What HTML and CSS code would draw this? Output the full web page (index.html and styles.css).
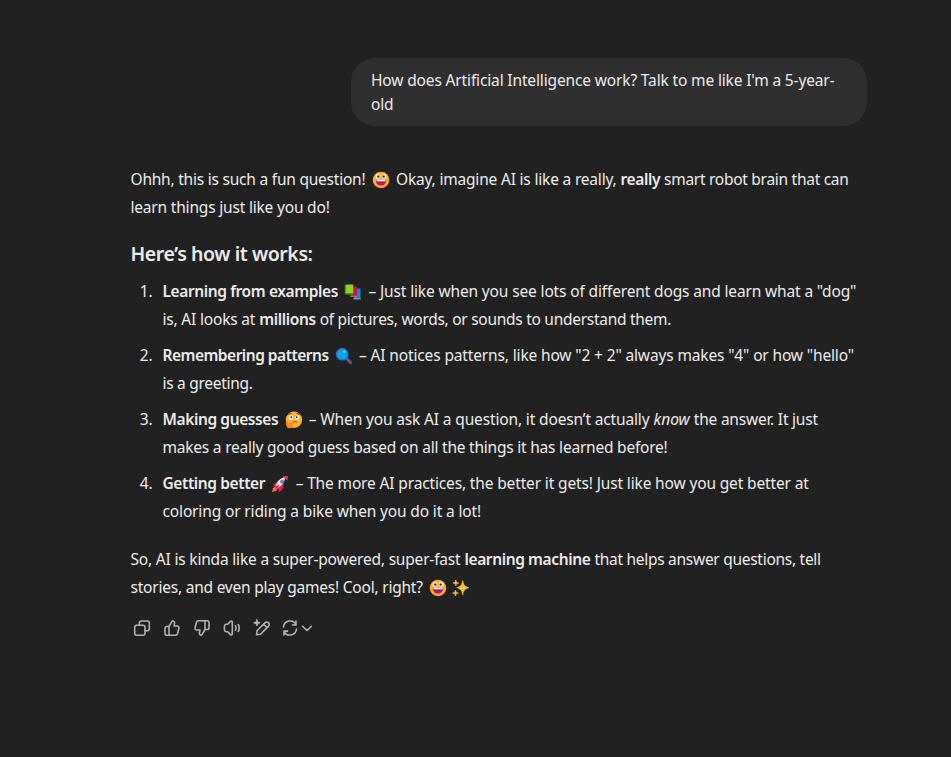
FILE: index.html
```html
<!DOCTYPE html>
<html lang="en">
<head>
<meta charset="utf-8">
<title>Conversation</title>
<link rel="stylesheet" href="styles.css">
</head>
<body>
<svg class="defs" width="0" height="0">
  <symbol id="grin" viewBox="0 0 18 18"><circle cx="9" cy="9" r="8.300" fill="#f9921f"/><circle cx="9" cy="8.700" r="7.700" fill="#ffb02e"/><circle cx="6" cy="5.400" r="2.300" fill="#fff"/><circle cx="12" cy="5.400" r="2.300" fill="#fff"/><circle cx="6.300" cy="5.500" r="1.200" fill="#3b2a38"/><circle cx="11.700" cy="5.500" r="1.200" fill="#3b2a38"/><path d="M3.800 9h10.400c0 3.600-2 5.600-5.200 5.600S3.800 12.600 3.800 9z" fill="#bc1665"/><path d="M4.600 9h8.800v1.300H4.600z" fill="#fff"/></symbol>
  <symbol id="books" viewBox="0 0 18 18"><path d="M10 5.500h6.500v9.500H10z" fill="#008fe0"/><path d="M9.500 15.300h7.300v1H9.500z" fill="#a9c4de"/><path d="M7 3.500h6v10H7z" fill="#c80d55"/><path d="M5.500 12.800h7.500v1H6.500z" fill="#b58a9f"/><path d="M1.500 1.500h7.800v9H1.500z" fill="#86d51f"/><path d="M.8 2v8.500l1 1h7.700v-1H2V2z" fill="#4c9b18"/></symbol>
  <symbol id="lens" viewBox="0 0 18 18"><path d="M11.500 11.500l4 4" stroke="#635994" stroke-width="3" stroke-linecap="round"/><circle cx="7.200" cy="7.200" r="5.800" fill="#00a6ed" stroke="#4a5fa0" stroke-width="1.200"/><circle cx="9.300" cy="4.600" r="1.100" fill="#8bdcff"/></symbol>
  <symbol id="think" viewBox="0 0 18 18"><circle cx="9" cy="8.700" r="8.200" fill="#ffb02e"/><circle cx="6" cy="6.500" r="2.300" fill="#fff"/><circle cx="12" cy="6.500" r="2.300" fill="#fff"/><circle cx="6.300" cy="6.300" r="1" fill="#402a32"/><circle cx="11.700" cy="6.300" r="1" fill="#402a32"/><path d="M3.500 3.500l3-1M11.500 2.200l3 1.500M8 11.300c1.500-1 3-.8 4 .2" fill="none" stroke="#593429" stroke-width=".9"/><path d="M1 10c1-1 2 0 2 2l5-1c1.500 0 1.500 1.500.3 1.800L7 13c1.500 3-1 4.600-3 4.300C1.500 17 .500 13 1 10z" fill="#ff822d"/></symbol>
  <symbol id="rocket" viewBox="0 0 18 18"><path d="M3 9l5-4 5 5-2 5-3 2-1-4-2-2-3 1z" fill="#e51b57"/><path d="M5 10.500c1.500-5 5-7.800 9-8.500 0 5-3 8.500-7.500 11z" fill="#e7e6eb"/><path d="M12 1.200L17 .800l-.5 5z" fill="#ee3156"/><circle cx="11" cy="6.700" r="1.900" fill="#438db8"/><path d="M1 17l1-4 3-2 2 2-2 3z" fill="#ff7043"/><path d="M5 13l3-3" stroke="#c31355" stroke-width="1.500"/></symbol>
  <symbol id="sparkle" viewBox="0 0 18 18"><path d="M10.700 1.500c.9 4.500 1.700 5.800 6.300 7.200-4.600 1.400-5.400 2.600-6.300 7.300-.9-4.700-1.700-5.900-6-7.300 4.300-1.400 5.100-2.700 6-7.200zM3.800 1l.8 2.200 2.200.8-2.200.8L3.800 7 3 4.800.8 4 3 3.200zM3.500 11l.8 2.200 2.200.8-2.200.8-.8 2.200-.8-2.200L.5 14l2.200-.8z" fill="#fcc23a" stroke="#fcc23a" stroke-width=".5"/></symbol>
</svg>
<main class="thread">
  <div class="bubble"><span class="line"><span class="k1">How does Artificial Intelligence work? Talk to me like I'm a 5-year-</span></span><span class="line"><span class="k1">old</span></span></div>
  <article class="answer">
    <p class="intro"><span class="line"><span class="k3">Ohhh, this is such a fun question!</span> <svg class="emoji"><use href="#grin"/></svg> <span class="k2">Okay, imagine AI is like a really,</span> <b>really</b> <span class="k4">smart robot brain that can</span></span><span class="line"><span class="k2">learn things just like you do!</span></span></p>
    <h3>Here’s how it works:</h3>
    <ol>
      <li><div><span class="line"><b>Learning from examples</b> <svg class="emoji"><use href="#books"/></svg> <span class="k1">– Just like when you see lots of different dogs and learn what a "dog"</span></span><span class="line"><span class="k2">is, AI looks at</span> <b>millions</b> <span class="k4">of pictures, words, or sounds to understand them.</span></span></div></li>
      <li><div><span class="line"><b class="k5">Remembering patterns</b> <svg class="emoji"><use href="#lens"/></svg> <span class="k1">– AI notices patterns, like how "2 + 2" always makes "4" or how "hello"</span></span><span class="line"><span class="k4">is a greeting.</span></span></div></li>
      <li><div><span class="line"><b>Making guesses</b> <svg class="emoji"><use href="#think"/></svg> <span class="k1">– When you ask AI a question, it doesn’t actually</span> <i>know</i> <span class="k3">the answer. It just</span></span><span class="line"><span class="k3">makes a really good guess based on all the things it has learned before!</span></span></div></li>
      <li><div><span class="line"><b>Getting better</b> <svg class="emoji"><use href="#rocket"/></svg> <span class="k1">– The more AI practices, the better it gets! Just like how you get better at</span></span><span class="line"><span class="k1">coloring or riding a bike when you do it a lot!</span></span></div></li>
    </ol>
    <p class="outro"><span class="line"><span class="k2">So, AI is kinda like a super-powered, super-fast</span> <b>learning machine</b> <span class="k4">that helps answer questions, tell</span></span><span class="line"><span class="k3">stories, and even play games! Cool, right?</span> <svg class="emoji"><use href="#grin"/></svg><svg class="emoji"><use href="#sparkle"/></svg></span></p>
    <div class="actions">
      <button aria-label="Copy"><svg viewBox="0 0 18 18"><rect x="1.700" y="6.200" width="10.300" height="10.100" rx="2"/><path d="M6.300 6V3.900a2 2 0 0 1 2-2h6a2 2 0 0 1 2 2v5.900a2 2 0 0 1-2 2h-2"/></svg></button>
      <button aria-label="Good response"><svg viewBox="0 0 18 18"><path d="M6 7.500L9 2.400c.3-.6.800-.7 1.300-.5 1.200.4 1.500 1.200 1.300 2.200L11 7h3.200c1.300 0 2 1 1.700 2.200l-1.300 5.300c-.3 1.100-1 1.700-2.200 1.700H3.800c-1.100 0-1.800-.7-1.800-1.800V9.300c0-1.100.7-1.800 1.800-1.800zM6 7.500v8.500"/></svg></button>
      <button aria-label="Bad response"><svg viewBox="0 0 18 18"><path d="M12 10.500L9 15.600c-.3.600-.8.700-1.300.5-1.200-.4-1.500-1.200-1.300-2.200L7 11H3.800c-1.300 0-2-1-1.700-2.200l1.300-5.300c.3-1.100 1-1.700 2.200-1.700h8.600c1.100 0 1.800.7 1.800 1.800v5.100c0 1.100-.7 1.800-1.800 1.800zM12 10.500V2"/></svg></button>
      <button aria-label="Read aloud"><svg viewBox="0 0 18 18"><path d="M9.300 3.200c0-1.200-1-1.600-1.900-.8L4.700 5.200H3.300c-.8 0-1.400.4-1.600 1.200-.5 1.700-.5 3.500 0 5.200.2.800.8 1.200 1.600 1.200h1.400l2.700 2.800c.9.800 1.900.4 1.900-.8zM12.400 6.700c.8 1.500.8 3.100 0 4.600M15.200 5.500c1.400 2.300 1.400 4.700 0 7"/></svg></button>
      <button aria-label="Edit in canvas"><svg viewBox="0 0 18 18"><path d="M3.500 15.800l.5-4 7.900-7.900c1.200-1.200 2.500-1.200 3.600-.1s1.100 2.400-.1 3.600l-7.900 7.900zM10.600 5.200l3.500 3.500"/><path d="M3.900.8l.9 2.100 2.300.9-2.300.9-.9 2.200L3 4.700.7 3.800 3 2.900z" fill="currentColor" stroke-width="1"/></svg></button>
      <button class="retry" aria-label="Switch model"><svg viewBox="0 0 18 18"><path d="M2.500 8A6.600 6.600 0 0 1 15 5.700V2M15.200 5.900h-3.900M15.500 10A6.600 6.600 0 0 1 3 12.300V16M2.800 12.100h3.900"/></svg><svg class="chev" viewBox="0 0 12 18"><path d="M1.600 7.200L6 11.500l4.400-4.300"/></svg></button>
    </div>
  </article>
</main>
</body>
</html>
```
FILE: styles.css
```css
body{margin:0;background:#212121;color:#ececec;font:15.500px/28px "Noto Sans",sans-serif}
.defs{position:absolute}
.thread{width:736.500px;margin-left:130.500px;padding-top:58px}
.line{display:block;white-space:nowrap}
.bubble{box-sizing:border-box;width:516px;margin-left:auto;padding:10px 20px;line-height:24px;background:#2f2f2f;border-radius:24px}
.answer{padding-top:39px}
p,h3,ol{margin:0}
h3{font-size:19.500px;margin:19px 0 9px;letter-spacing:-.42px}
ol{padding:0;list-style:none;counter-reset:step}
li{display:grid;grid-template-columns:22px 1fr;column-gap:10px;counter-increment:step}
li+li{margin-top:8px}
li::before{content:counter(step) ".";text-align:right;letter-spacing:-.2px}
b,h3{font-weight:600}
b{letter-spacing:-.39px}
.k1{letter-spacing:-.145px}
.k2{letter-spacing:-.19px}
.k3{letter-spacing:-.22px}
.k4{letter-spacing:-.28px}
.k5{letter-spacing:-.5px}
.emoji{width:18px;height:18px;margin:0 2.200px 0 2.300px;vertical-align:-3.500px}
.outro{margin-top:20px}
.actions{display:flex;margin:12px 0 0 -3.500px}
button{display:flex;align-items:center;justify-content:center;width:30px;height:30px;padding:0;border:0;background:none;color:#b4b4b4}
button svg{width:18px;height:18px;fill:none;stroke:currentColor;stroke-width:1.550;stroke-linecap:round;stroke-linejoin:round}
.retry{width:44px;justify-content:flex-start;padding-left:4px}
.retry .chev{width:12px;margin-left:2px;flex:none}
```
